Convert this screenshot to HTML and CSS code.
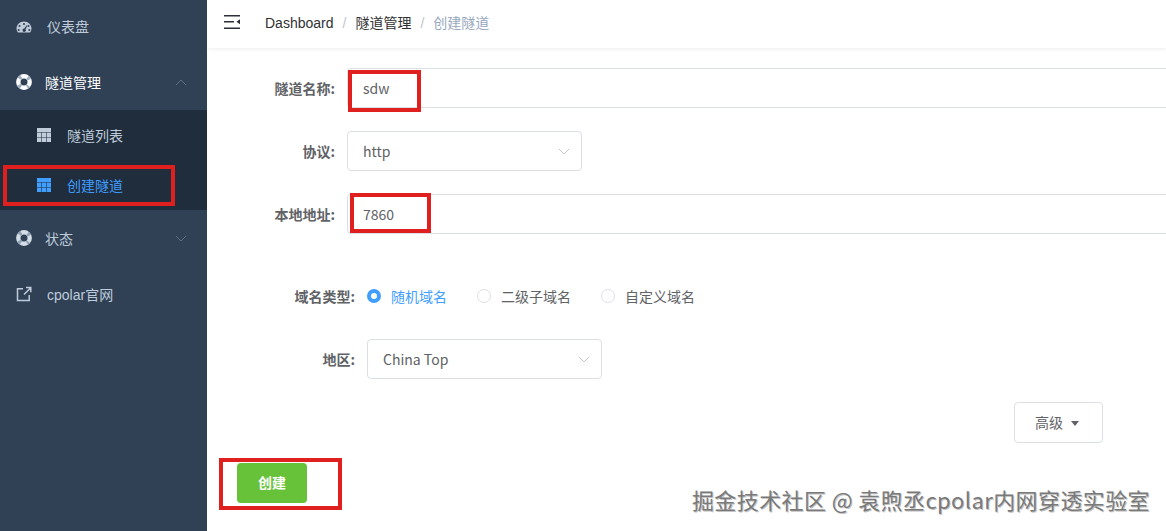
FILE: index.html
```html
<!DOCTYPE html>
<html lang="en">

<head>
    <meta charset="UTF-8">
    <title>创建隧道</title>
    <link rel="stylesheet" href="styles.css">
</head>

<body>
    <div class="layout">
        <!--Left menu-->
        <div class="sidebar">
            <div class="menu_item first">
                <svg class="menu_icon" viewBox="0 0 16 16"><path fill="#bfcbd9" fill-rule="evenodd" d="M8 2.5C3.8 2.5.5 5.7.5 9.6c0 1.3.4 2.5 1 3.4.2.3.4.5.8.5h11.4c.4 0 .6-.2.8-.5.6-1 1-2.100 1-3.400 0-3.900-3.300-7.100-7.500-7.100zM8 4a1 1 0 1 1 0 2 1 1 0 0 1 0-2zM3.500 6a1 1 0 1 1 0 2 1 1 0 0 1 0-2zm9 0a1 1 0 1 1 0 2 1 1 0 0 1 0-2zM10.600 6.300l.7.400-1.700 3.600a1.700 1.700 0 1 1-1.300-.7zM2.700 10a1 1 0 1 1 0 2 1 1 0 0 1 0-2zm10.600 0a1 1 0 1 1 0 2 1 1 0 0 1 0-2z"/></svg>
                <span class="menu_text">仪表盘</span>
            </div>

            <div class="menu_item open">
                <svg class="menu_icon buoy" viewBox="0 0 16 16"><circle cx="8" cy="8" r="5.700" fill="none" stroke="#fff" stroke-width="4.400"/><circle cx="8" cy="8" r="5.700" fill="none" stroke="#9fb0c2" stroke-width="4.400" stroke-dasharray="3 5.950" stroke-dashoffset="1.500" transform="rotate(45 8 8)"/></svg>
                <span class="menu_text">隧道管理</span>
                <svg class="arrow" viewBox="0 0 12 7"><path d="M1 6l5-5 5 5" fill="none" stroke="#5f6f82" stroke-width="1"/></svg>
            </div>

            <div class="submenu">
                <div class="sub_item">
                    <svg class="sub_icon" viewBox="0 0 14 14"><path fill="#bfcbd9" d="M0 0h14v4H0zM0 4.600h4.300V9H0zM4.850 4.600h4.300V9h-4.300zM9.700 4.600H14V9H9.700zM0 9.600h4.300V14H0zM4.850 9.600h4.300V14h-4.300zM9.700 9.600H14V14H9.700z"/></svg>
                    <span>隧道列表</span>
                </div>
                <div class="sub_item active">
                    <svg class="sub_icon" viewBox="0 0 14 14"><path fill="#409eff" d="M0 0h14v4H0zM0 4.600h4.300V9H0zM4.850 4.600h4.300V9h-4.300zM9.700 4.600H14V9H9.700zM0 9.600h4.300V14H0zM4.850 9.600h4.300V14h-4.300zM9.700 9.600H14V14H9.700z"/></svg>
                    <span>创建隧道</span>
                </div>
            </div>

            <div class="menu_item">
                <svg class="menu_icon buoy" viewBox="0 0 16 16"><circle cx="8" cy="8" r="5.700" fill="none" stroke="#d5dde6" stroke-width="4.400"/><circle cx="8" cy="8" r="5.700" fill="none" stroke="#8fa1b4" stroke-width="4.400" stroke-dasharray="3 5.950" stroke-dashoffset="1.500" transform="rotate(45 8 8)"/></svg>
                <span class="menu_text">状态</span>
                <svg class="arrow" viewBox="0 0 12 7"><path d="M1 1l5 5 5-5" fill="none" stroke="#5f6f82" stroke-width="1"/></svg>
            </div>

            <div class="menu_item">
                <svg class="menu_icon" viewBox="0 0 16 16"><path fill="none" stroke="#bfcbd9" stroke-width="1.500" d="M7 2.800H1.500v11.700h11.700V9M8 8.500L14.500 2M10 1.500h4.800v4.800"/></svg>
                <span class="menu_text latin">cpolar官网</span>
            </div>
        </div>

        <div class="main">
            <!--Top bar-->
            <div class="navbar">
                <svg class="hamburger" viewBox="0 0 16 14"><path fill="#2b2f3a" d="M0 0h16v1.600H0zM0 6h10v1.600H0zM0 12.400h16V14H0zM16 4.200v5L12.500 6.800z"/></svg>
                <div class="breadcrumb">
                    <span>Dashboard</span>
                    <i>/</i>
                    <span>隧道管理</span>
                    <i>/</i>
                    <span class="last">创建隧道</span>
                </div>
            </div>

            <!--Form-->
            <div class="form">
                <div class="form_row">
                    <label class="form_label">隧道名称:</label>
                    <input class="input wide" type="text" value="sdw">
                </div>
                <div class="form_row">
                    <label class="form_label">协议:</label>
                    <div class="input select">http
                        <svg class="caret" viewBox="0 0 12 7"><path d="M1 1l5 5 5-5" fill="none" stroke="#c0c4cc" stroke-width="1"/></svg>
                    </div>
                </div>
                <div class="form_row">
                    <label class="form_label">本地地址:</label>
                    <input class="input wide" type="text" value="7860">
                </div>

                <div class="form_row radios">
                    <label class="form_label long">域名类型:</label>
                    <div class="radio checked"><span class="dot"></span>随机域名</div>
                    <div class="radio"><span class="dot"></span>二级子域名</div>
                    <div class="radio"><span class="dot"></span>自定义域名</div>
                </div>
                <div class="form_row region">
                    <label class="form_label long">地区:</label>
                    <div class="input select">China Top
                        <svg class="caret" viewBox="0 0 12 7"><path d="M1 1l5 5 5-5" fill="none" stroke="#c0c4cc" stroke-width="1"/></svg>
                    </div>
                </div>

                <div class="more_row">
                    <button class="btn_more">高级<span class="tri"></span></button>
                </div>
                <button class="btn_create">创建</button>
            </div>
        </div>
    </div>

    <!--Annotations drawn over the screenshot-->
    <div class="mark mark_menu"></div>
    <div class="mark mark_name"></div>
    <div class="mark mark_addr"></div>
    <div class="mark mark_create"></div>
    <div class="watermark">掘金技术社区 @ 袁煦丞cpolar内网穿透实验室</div>
</body>

</html>
```

FILE: styles.css
```css
* {
    margin: 0px;
    padding: 0px;
    box-sizing: border-box;
}

body {
    width: 1166px;
    height: 531px;
    overflow: hidden;
    background-color: white;
    font-family: "Noto Sans CJK SC", "Liberation Sans", sans-serif;
    font-size: 14px;
}

.layout {
    display: flex;
    height: 531px;
}

/*Left menu*/
.sidebar {
    width: 207px;
    flex-shrink: 0;
    background-color: #304156;
    color: #bfcbd9;
}

.menu_item {
    display: flex;
    align-items: center;
    height: 56px;
    padding-left: 16px;
    padding-right: 20px;
}

.menu_item.first {
    height: 54px;
}

.menu_item.first .menu_text {
    margin-bottom: 2px;
}

.menu_item.open {
    color: white;
}

.menu_icon {
    width: 16px;
    height: 16px;
    margin-right: 15px;
}

.menu_icon.buoy {
    margin-right: 13px;
}

.menu_text {
    flex: 1;
}

.latin {
    font-family: "Liberation Sans", "Noto Sans CJK SC", sans-serif;
}

.arrow {
    width: 12px;
    height: 7px;
}

.submenu {
    background-color: #1f2d3d;
}

.sub_item {
    display: flex;
    align-items: center;
    height: 50px;
    padding-left: 37px;
}

.sub_item.active {
    color: #409eff;
}

.sub_icon {
    width: 14px;
    height: 14px;
    margin-right: 16px;
}

/*Right side*/
.main {
    flex: 1;
    min-width: 0;
    overflow: hidden;
}

.navbar {
    display: flex;
    align-items: center;
    height: 48px;
    padding-left: 17px;
    box-shadow: 0 1px 4px rgba(0, 21, 41, 0.08);
}

.hamburger {
    width: 16px;
    height: 14px;
    margin-right: 25px;
    margin-bottom: 4px;
}

.breadcrumb {
    display: flex;
    align-items: baseline;
    margin-bottom: 4px;
    color: #303133;
    font-family: "Liberation Sans", "Noto Sans CJK SC", sans-serif;
}

.breadcrumb i {
    font-style: normal;
    color: #c0c4cc;
    margin: 0 9px;
}

.breadcrumb .last {
    color: #97a8be;
}

.form {
    padding-top: 20px;
}

.form_row {
    display: flex;
    align-items: center;
    margin-bottom: 23px;
    color: #606266;
}

.form_label {
    width: 128px;
    margin-right: 12px;
    text-align: right;
    font-weight: 700;
    flex-shrink: 0;
}

.form_label.long {
    width: 148px;
    margin-right: 12px;
}

.input {
    display: flex;
    align-items: center;
    position: relative;
    flex-shrink: 0;
    height: 40px;
    padding-left: 15px;
    border: 1px solid #dcdfe6;
    border-radius: 4px;
    color: #606266;
    font-family: inherit;
    font-size: 14px;
    background-color: white;
}

.input.wide {
    width: 900px;
}

.input.select {
    width: 235px;
}

.caret {
    position: absolute;
    right: 11px;
    top: 16px;
    width: 12px;
    height: 7px;
}

.radios {
    margin-top: 42px;
    height: 40px;
    margin-bottom: 23px;
}

.radio {
    display: flex;
    align-items: center;
    margin-right: 30px;
}

.radio .dot {
    width: 14px;
    height: 14px;
    margin-right: 10px;
    border: 1px solid #dcdfe6;
    border-radius: 50%;
}

.radio.checked {
    color: #409eff;
}

.radio.checked .dot {
    border: 4px solid #409eff;
}

.region {
    margin-bottom: 23px;
}

.more_row {
    display: flex;
    justify-content: flex-end;
    padding-right: 63px;
}

.btn_more {
    display: flex;
    align-items: center;
    justify-content: center;
    width: 89px;
    height: 41px;
    padding-right: 3px;
    padding-bottom: 2px;
    border: 1px solid #dcdfe6;
    border-radius: 4px;
    background-color: white;
    color: #606266;
    font-family: inherit;
    font-size: 14px;
}

.tri {
    width: 0;
    height: 0;
    margin-top: 4px;
    margin-left: 8px;
    border-left: 4px solid transparent;
    border-right: 4px solid transparent;
    border-top: 5px solid #606266;
}

.btn_create {
    display: block;
    width: 70px;
    height: 40px;
    margin-top: 20px;
    margin-left: 30px;
    padding-bottom: 2px;
    border: none;
    border-radius: 4px;
    background-color: #67c23a;
    color: white;
    font-family: inherit;
    font-size: 14px;
    font-weight: 700;
}

/*Red annotation boxes*/
.mark {
    position: absolute;
    border: 4px solid #e01f1f;
}

.mark_menu {
    left: 3px;
    top: 165px;
    width: 172px;
    height: 41px;
}

.mark_name {
    left: 348px;
    top: 70px;
    width: 73px;
    height: 42px;
}

.mark_addr {
    left: 350px;
    top: 193px;
    width: 81px;
    height: 40px;
}

.mark_create {
    left: 219px;
    top: 458px;
    width: 123px;
    height: 52px;
}

.watermark {
    position: absolute;
    right: 16px;
    top: 484px;
    color: #7a7a7a;
    font-size: 22px;
    line-height: 30px;
    letter-spacing: 0.4px;
    white-space: nowrap;
    text-shadow: 1px 1px 0 #c4c4c4;
}
```
